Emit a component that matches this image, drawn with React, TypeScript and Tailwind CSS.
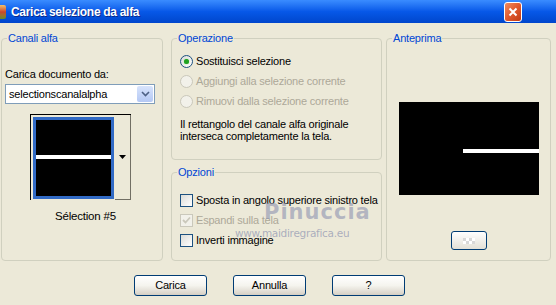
import React from "react";

function GroupBox({
  title,
  className,
  children,
}: {
  title: string;
  className?: string;
  children?: React.ReactNode;
}) {
  return (
    <div className={`relative rounded-[4px] border border-[#D0D0BF] ${className ?? ""}`}>
      <span className="absolute -top-[8px] left-[5px] bg-[#ECE9D8] px-[1px] leading-[14px] text-[#0046D5]">
        {title}
      </span>
      {children}
    </div>
  );
}

function Radio({ label, checked, disabled }: { label: string; checked?: boolean; disabled?: boolean }) {
  return (
    <div className="flex h-[20px] items-center gap-[3px]">
      <span
        className={`flex h-[13px] w-[13px] items-center justify-center rounded-full border bg-gradient-to-br ${
          disabled ? "border-[#CAC8BB] from-[#F2F1EA] to-[#F2F1EA]" : "border-[#1C5180] from-[#DCDCD7] to-white"
        }`}
      >
        {checked && <span className="h-[5px] w-[5px] rounded-full bg-[#21A121] shadow-[0_0_1px_#55D051]" />}
      </span>
      <span className={`whitespace-nowrap ${disabled ? "text-[#ACA899]" : "text-black"}`}>{label}</span>
    </div>
  );
}

function Check({ label, checked, disabled }: { label: string; checked?: boolean; disabled?: boolean }) {
  return (
    <div className="flex h-[20px] items-center gap-[3px]">
      <span
        className={`flex h-[13px] w-[13px] items-center justify-center border ${
          disabled ? "border-[#CAC8BB] bg-[#F2F1EA]" : "border-[#1C5180] bg-gradient-to-br from-[#DCDCD7] to-white"
        }`}
      >
        {checked && (
          <svg width="9" height="9" viewBox="0 0 9 9">
            <path d="M1 4 L3.5 6.5 L8 1.5" fill="none" stroke={disabled ? "#CAC8BB" : "#21A121"} strokeWidth="1.8" />
          </svg>
        )}
      </span>
      <span className={`whitespace-nowrap ${disabled ? "text-[#ACA899]" : "text-black"}`}>{label}</span>
    </div>
  );
}

function XpButton({ label }: { label: string }) {
  return (
    <button
      type="button"
      className="h-[21px] w-[73px] rounded-[3px] border border-[#003C74] bg-gradient-to-b from-white via-[#F5F4EE] to-[#D6D0C5] text-[11px] text-black shadow-[inset_0_-1px_0_#D6D0C5]"
    >
      {label}
    </button>
  );
}

export default function App() {
  return (
    <div className="relative h-[305px] w-[556px] overflow-hidden bg-[#ECE9D8] font-['Liberation_Sans',Arial,sans-serif] text-[11px] tracking-[-0.2px] text-black">
      {/* title bar */}
      <div className="flex h-[23px] items-center justify-between bg-gradient-to-b from-[#3A8CFF] via-[#0758E8] to-[#0046CC]">
        <div className="flex items-center">
          <span className="-ml-[8px] h-[14px] w-[14px] rounded-[2px] bg-gradient-to-b from-[#F3C06A] via-[#C9452B] to-[#5B8A2E]" />
          <span className="ml-[5px] text-[12px] font-bold tracking-[-0.3px] text-white [text-shadow:1px_1px_0_#0A2A8C]">
            Carica selezione da alfa
          </span>
        </div>
        <div className="mr-[34px] flex h-[20px] w-[18px] items-center justify-center rounded-[3px] border border-white bg-gradient-to-br from-[#F08A5D] via-[#E0592E] to-[#C13A12]">
          <svg width="10" height="10" viewBox="0 0 10 10">
            <path d="M1.5 1.5 L8.5 8.5 M8.5 1.5 L1.5 8.5" stroke="white" strokeWidth="2" />
          </svg>
        </div>
      </div>

      {/* groups */}
      <div className="flex pl-[1px] pt-[15px]">
        <GroupBox title="Canali alfa" className="h-[223px] w-[162px]">
          <div className="flex flex-col pl-[3px] pt-[28px]">
            <span className="leading-[14px]">Carica documento da:</span>
            <div className="mt-[3px] flex h-[20px] w-[150px] items-center justify-between border border-[#7F9DB9] bg-white pl-[3px]">
              <span>selectionscanalalpha</span>
              <span className="mr-[1px] flex h-[16px] w-[16px] items-center justify-center rounded-[2px] bg-gradient-to-b from-[#D8E4FC] to-[#B4C8F4]">
                <svg width="9" height="6" viewBox="0 0 9 6">
                  <path d="M1 1 L4.5 4.5 L8 1" fill="none" stroke="#4D6185" strokeWidth="1.6" />
                </svg>
              </span>
            </div>
            <div className="ml-[25px] mt-[10px] flex h-[86px] w-[101px] border-l border-t border-black">
              <div className="flex h-[85px] w-[84px] items-center justify-center">
                <div className="h-[82px] w-[81px] border-[3px] border-[#316AC5] bg-black pt-[35px]">
                  <div className="h-[4px] w-full bg-white" />
                </div>
              </div>
              <div className="flex w-[16px] items-center justify-center border-b border-r border-[#716F64] bg-[#ECE9D8]">
                <svg width="7" height="4" viewBox="0 0 7 4">
                  <path d="M0 0 H7 L3.5 4 Z" fill="black" />
                </svg>
              </div>
            </div>
            <span className="ml-[50px] mt-[9px] text-[11.5px] leading-[14px]">Sélection #5</span>
          </div>
        </GroupBox>

        <div className="ml-[8px] flex w-[211px] flex-col gap-[12px]">
          <GroupBox title="Operazione" className="h-[122px]">
            <div className="flex flex-col pl-[8px] pt-[12px]">
              <Radio label="Sostituisci selezione" checked />
              <Radio label="Aggiungi alla selezione corrente" disabled />
              <Radio label="Rimuovi dalla selezione corrente" disabled />
              <p className="mt-[7px] leading-[12px]">
                Il rettangolo del canale alfa originale
                <br />
                interseca completamente la tela.
              </p>
            </div>
          </GroupBox>
          <GroupBox title="Opzioni" className="h-[89px]">
            <div className="flex flex-col pl-[8px] pt-[17px]">
              <Check label="Sposta in angolo superiore sinistro tela" />
              <Check label="Espandi sulla tela" checked disabled />
              <Check label="Inverti immagine" />
            </div>
          </GroupBox>
        </div>

        <GroupBox title="Anteprima" className="ml-[4px] h-[223px] w-[165px]">
          <div className="flex flex-col items-center pt-[63px]">
            <div className="flex h-[93px] w-[140px] justify-end bg-black pt-[47px]">
              <div className="h-[4px] w-[76px] bg-white" />
            </div>
            <div className="mt-[36px] flex h-[19px] w-[36px] items-center justify-center rounded-[3px] border border-[#003C74] bg-gradient-to-b from-white to-[#E3E0D6]">
              <div className="grid grid-cols-4">
                <span className="h-[3px] w-[3px] bg-[#D8D8D8]" />
                <span className="h-[3px] w-[3px] bg-white" />
                <span className="h-[3px] w-[3px] bg-[#D8D8D8]" />
                <span className="h-[3px] w-[3px] bg-white" />
                <span className="h-[3px] w-[3px] bg-white" />
                <span className="h-[3px] w-[3px] bg-[#D8D8D8]" />
                <span className="h-[3px] w-[3px] bg-white" />
                <span className="h-[3px] w-[3px] bg-[#D8D8D8]" />
              </div>
            </div>
          </div>
        </GroupBox>
      </div>

      {/* buttons */}
      <div className="mt-[14px] flex gap-[26px] pl-[134px]">
        <XpButton label="Carica" />
        <XpButton label="Annulla" />
        <XpButton label="?" />
      </div>

      {/* watermark */}
      <span className="pointer-events-none absolute left-[264px] top-[202px] font-['DejaVu_Sans',sans-serif] text-[21px] font-bold leading-none tracking-[1px] text-[#8C93B0]/60">
        Pinuccia
      </span>
      <span className="pointer-events-none absolute left-[235px] top-[228px] font-['DejaVu_Sans',sans-serif] text-[10.5px] leading-none tracking-[-0.3px] text-[#8C93B0]/70">
        www.maidiregrafica.eu
      </span>
    </div>
  );
}
